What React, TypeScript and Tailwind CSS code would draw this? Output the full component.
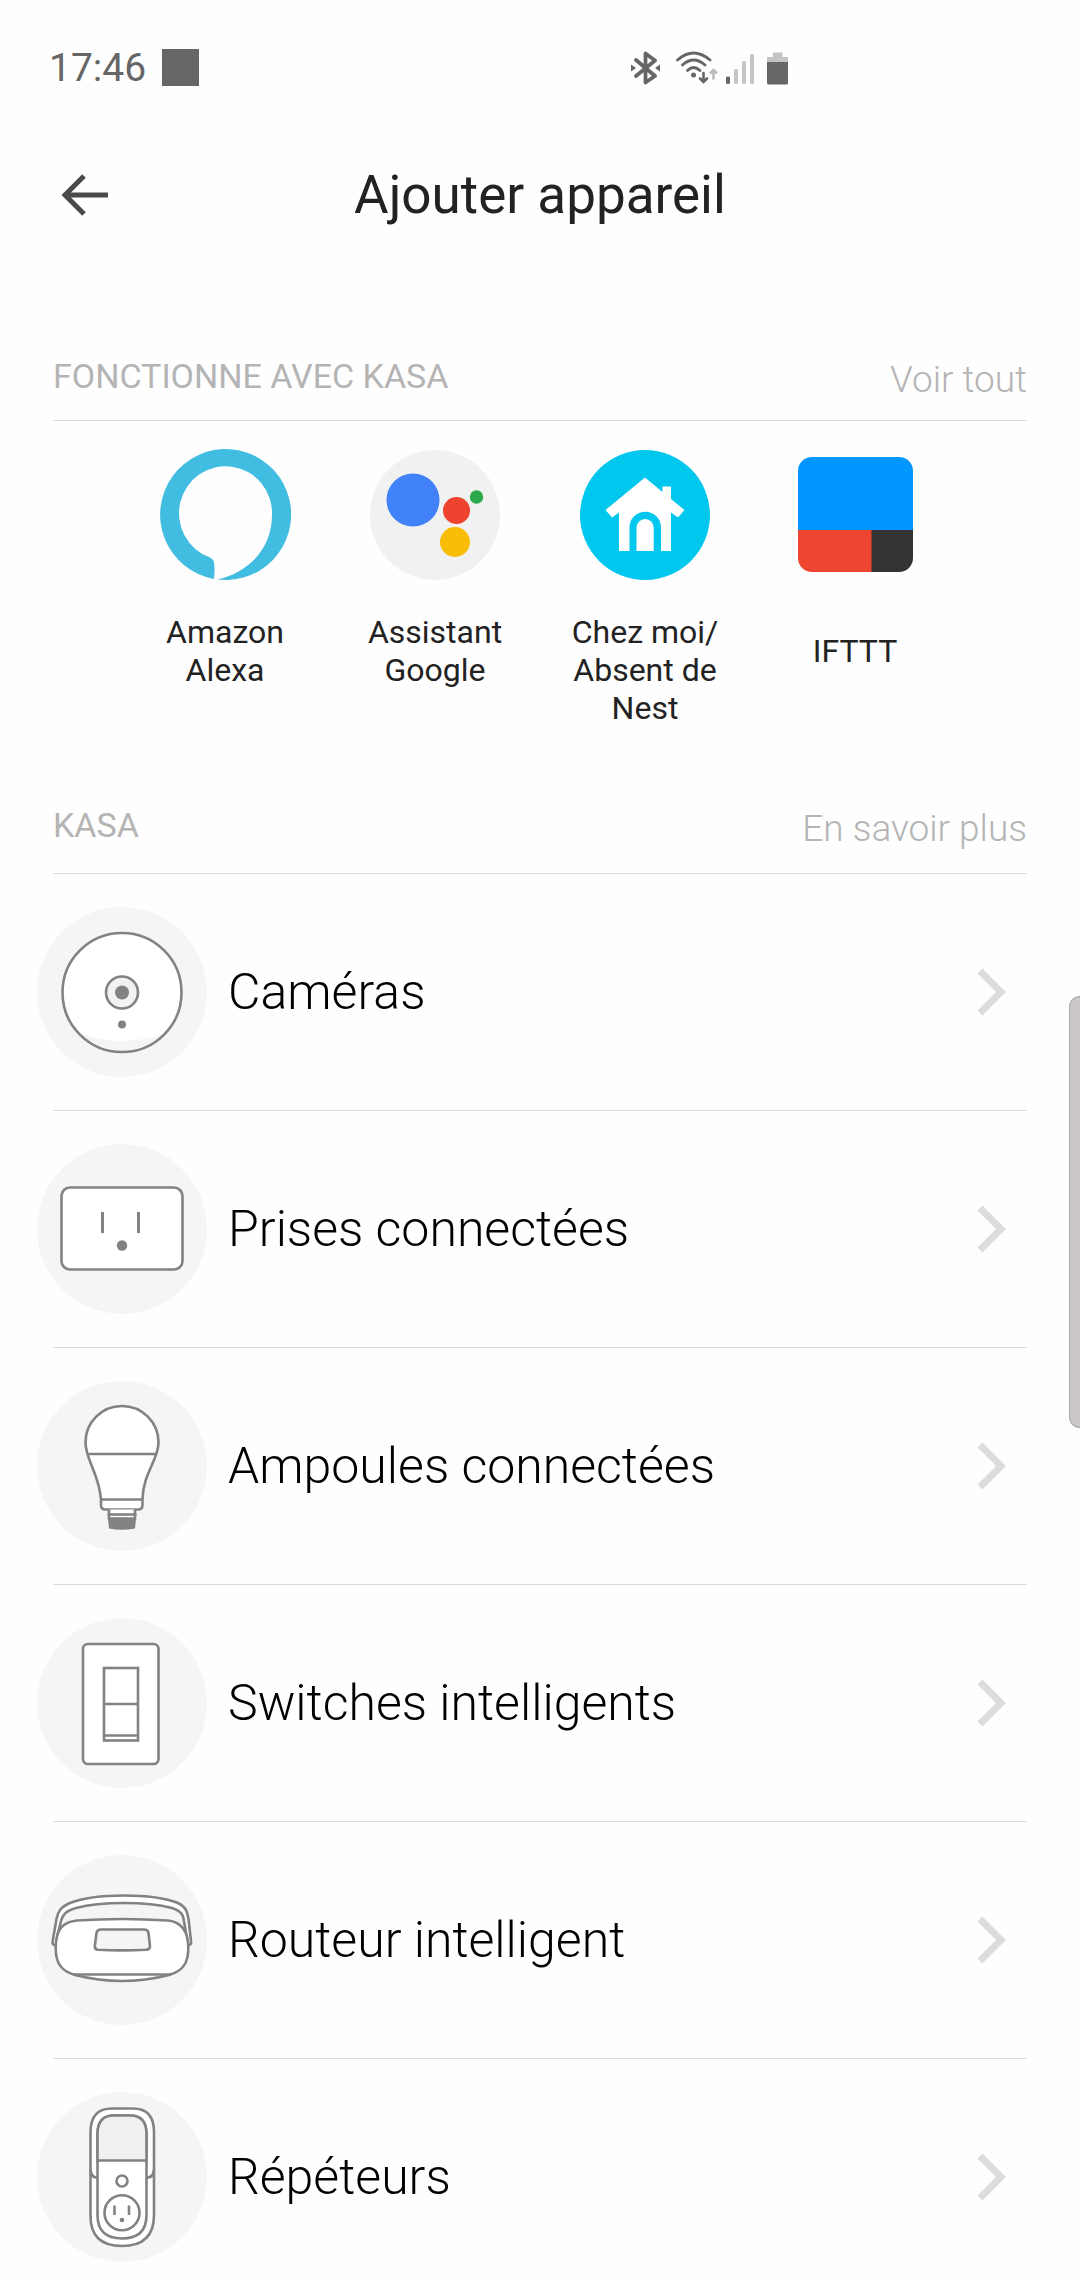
import React from 'react';

interface Partner {
  id: string;
  name: string;
  logo: React.ReactNode;
}

interface Category {
  id: string;
  name: string;
  icon: React.ReactNode;
}

const partners: Partner[] = [
  { id: 'alexa', name: 'Amazon Alexa', logo: <AlexaLogo /> },
  { id: 'google', name: 'Assistant Google', logo: <GoogleLogo /> },
  { id: 'nest', name: 'Chez moi/ Absent de Nest', logo: <NestLogo /> },
  { id: 'ifttt', name: 'IFTTT', logo: <IftttLogo /> },
];

const categories: Category[] = [
  { id: 'cameras', name: 'Caméras', icon: <CameraIcon /> },
  { id: 'plugs', name: 'Prises connectées', icon: <PlugIcon /> },
  { id: 'bulbs', name: 'Ampoules connectées', icon: <BulbIcon /> },
  { id: 'switches', name: 'Switches intelligents', icon: <SwitchIcon /> },
  { id: 'router', name: 'Routeur intelligent', icon: <RouterIcon /> },
  { id: 'extenders', name: 'Répéteurs', icon: <ExtenderIcon /> },
];

/* Partner logos */

function AlexaLogo() {
  return (
    <svg className="size-[131px]" viewBox="0 0 131 131" aria-hidden="true">
      <path
        fill="#40bde0"
        d="M54 130A65.5 65.5 0 1 1 68 131L57 130.5C88 124 112 100 112 66A46.5 47 0 1 0 50 108.500Q53 109.500 54 113Q55 120 54 130Z"
      />
    </svg>
  );
}

function GoogleLogo() {
  return (
    <svg className="size-[130px]" viewBox="0 0 130 130" aria-hidden="true">
      <circle cx="65" cy="65" r="65" fill="#f1f1f1" />
      <circle cx="43" cy="50" r="26.5" fill="#4182f8" />
      <circle cx="86.500" cy="60.500" r="13.500" fill="#ee432e" />
      <circle cx="106.500" cy="47" r="6.700" fill="#2ba84a" />
      <circle cx="85" cy="92" r="15" fill="#fabd05" />
    </svg>
  );
}

function NestLogo() {
  return (
    <svg className="size-[130px]" viewBox="0 0 130 130" aria-hidden="true">
      <circle cx="65" cy="65" r="65" fill="#00c7ee" />
      <path
        fill="#fff"
        d="M65 27.500L82.500 42V36.500H91V49L104.500 60L98 67.500L91 62.500V101H81V77.500A15.700 15.700 0 0 0 49.500 77.500V101H39V62.500L32 67.500L25.500 60Z"
      />
      <path fill="#fff" d="M56.500 101V77.500A8.600 8.600 0 0 1 73.700 77.500V101Z" />
    </svg>
  );
}

function IftttLogo() {
  return (
    <svg className="size-[115px]" viewBox="0 0 115 115" aria-hidden="true">
      <clipPath id="ifttt-tile">
        <rect width="115" height="115" rx="14" />
      </clipPath>
      <g clipPath="url(#ifttt-tile)">
        <rect width="115" height="74" fill="#0096ff" />
        <rect y="73" width="74" height="42" fill="#ee4530" />
        <rect x="73.500" y="73" width="42" height="42" fill="#333" />
      </g>
    </svg>
  );
}

/* Category icons: outline drawings on a grey disc */

function Disc({ children }: { children: React.ReactNode }) {
  return (
    <svg
      className="size-[170px] shrink-0"
      viewBox="0 0 170 170"
      fill="#fff"
      stroke="#828282"
      strokeWidth="2.600"
      aria-hidden="true"
    >
      <circle cx="85" cy="85" r="85" fill="#f5f5f5" stroke="none" />
      {children}
    </svg>
  );
}

function CameraIcon() {
  return (
    <Disc>
      <circle cx="85" cy="85.500" r="59.500" stroke="none" />
      <path d="M43 126Q85 142 127 126A59.500 59.500 0 0 1 43 126Z" fill="#f5f5f5" stroke="none" />
      <circle cx="85" cy="85.500" r="59.500" fill="none" />
      <circle cx="85" cy="85.500" r="16" fill="#f2f2f2" />
      <circle cx="85" cy="85.500" r="7" fill="#828282" stroke="none" />
      <circle cx="85" cy="117.500" r="4" fill="#828282" stroke="none" />
    </Disc>
  );
}

function PlugIcon() {
  return (
    <Disc>
      <rect x="24.500" y="43.500" width="121" height="82" rx="8.500" />
      <path d="M65.500 68V89M101.500 68V89" strokeWidth="3" />
      <circle cx="85" cy="101.500" r="5.200" fill="#828282" stroke="none" />
    </Disc>
  );
}

function BulbIcon() {
  return (
    <Disc>
      <path d="M64 118.500C62 92 48.500 79 48.500 61.500A36.500 36.500 0 0 1 121.500 61.500C121.500 79 106 92 105.500 118.500V124Q105.500 128.500 101 128.500H68.500Q64 128.500 64 124Z" />
      <path d="M51.500 73H118.500M64 118.500H105.500" />
      <path d="M72 128.500V137.500H98V128.500" />
      <path d="M70.500 133.500H99.500" />
      <path d="M71 137.500H99L98 147.500Q85 150 72 147.500Z" fill="#828282" stroke="none" />
    </Disc>
  );
}

function SwitchIcon() {
  return (
    <Disc>
      <rect x="46" y="26" width="75.500" height="120" rx="5" />
      <rect x="67" y="50" width="34" height="72.500" />
      <path d="M67 86H101M67 117.500H101" />
    </Disc>
  );
}

function RouterIcon() {
  return (
    <Disc>
      <path
        strokeLinecap="round"
        d="M18 90Q15 90 15.700 86L19.500 64C21 56 24 52 33 48Q52 40.500 87 40.500T141 48C149 52 150 56 151.500 64L154 86Q155 90 151 90"
      />
      <path
        fill="#f5f5f5"
        d="M21 78L24 66C26 59 29 56 39 53Q58 48 87 48T135 53C144 56 146 59 147 66L149 78Z"
      />
      <path d="M18.700 93C18.700 74 26 67 40 65.500Q85 62.500 131 65.500C145 67 151.300 76 151.300 93C151.300 108 146 116 132 120Q85 132 38 120C24 116 18.700 108 18.700 93Z" />
      <path d="M36 119.500H134" fill="none" />
      <path
        fill="#f5f5f5"
        d="M64 74.500H107Q111 74.500 111.500 78L113 91Q113 94.500 109 94.800Q85 96 61 94.800Q57.500 94.500 57.800 91L59.500 78Q60 74.500 64 74.500Z"
      />
    </Disc>
  );
}

function ExtenderIcon() {
  return (
    <Disc>
      <path d="M53.500 40Q53.500 16.500 75 16.500H96Q117 16.500 117 40V123Q117 154 85 154T53.500 123Z" />
      <path d="M60.500 42Q60.500 23.500 77 23.500H93Q109.500 23.500 109.500 42V123Q109.500 146.500 85 146.500T60.500 123Z" />
      <path d="M60.500 68.500V42Q60.500 23.500 77 23.500H93Q109.500 23.500 109.500 42V68.500Z" fill="#f1f1f1" />
      <path d="M53.500 78Q54.500 86 60.500 85.500M117 78Q116 86 109.500 85.500" fill="none" />
      <circle cx="85" cy="89" r="5.500" />
      <circle cx="85" cy="120.700" r="17.500" />
      <path d="M77.500 113.500V123M92 113.500V123" />
      <circle cx="85" cy="128" r="2.300" fill="#828282" stroke="none" />
    </Disc>
  );
}

/* System status bar */

function StatusBar() {
  return (
    <div className="flex h-[135px] items-center pl-[49px] text-[#666]">
      <span className="text-[39px] leading-10">17:46</span>
      <span className="ml-4 size-[37px] bg-[#666]" />
      <div className="ml-[432px] flex items-center">
        <svg className="h-[34px] w-[29px]" viewBox="0 0 29 34" fill="none" stroke="currentColor" aria-hidden="true">
          <path
            d="M5 9L24 25L14.500 31.500V2.500L24 9.500L5 25"
            strokeWidth="3.800"
            strokeLinecap="round"
            strokeLinejoin="round"
          />
          <path d="M0 13.500L5 17L0 20.500ZM29 13.500L24 17L29 20.500Z" fill="currentColor" stroke="none" />
        </svg>
        <svg className="ml-4 h-[34px] w-[42px]" viewBox="0 0 42 34" fill="none" stroke="currentColor" aria-hidden="true">
          <path
            d="M1.500 9Q17.500 -5 34 9M6.500 14Q17.500 4 29 14M11.500 19.500Q17.500 13.500 24 19.500"
            strokeWidth="2.800"
            strokeLinecap="round"
          />
          <circle cx="17.500" cy="24" r="2.500" fill="currentColor" stroke="none" />
          <path d="M27.500 22V31M24 27.500L27.500 31L31 27.500" strokeWidth="2.600" strokeLinecap="round" />
          <path d="M37.500 28.500V19M34 22.500L37.500 19L41 22.500" stroke="#bbb" strokeWidth="2.600" />
        </svg>
        <svg className="ml-2 h-[34px] w-7" viewBox="0 0 28 34" fill="#c4c4c4" aria-hidden="true">
          <rect y="25.500" width="4" height="7.500" rx="1.500" fill="#666" />
          <rect x="8" y="18" width="4" height="15" rx="1.500" />
          <rect x="16" y="10" width="4" height="23" rx="1.500" />
          <rect x="24" y="3" width="4" height="30" rx="1.500" />
        </svg>
        <svg className="ml-[13px] h-[34px] w-[21px]" viewBox="0 0 21 34" aria-hidden="true">
          <path d="M6 1.500H15.500V6H21V12H0V6H6Z" fill="#c4c4c4" />
          <path d="M0 11H21V32Q21 33.500 19.500 33.500H1.500Q0 33.500 0 32Z" fill="#666" />
        </svg>
      </div>
    </div>
  );
}

function SectionHeader({ title, action, className }: { title: string; action: string; className: string }) {
  return (
    <div className={`flex items-end justify-between border-b border-[#dcdcdc] text-[#b4b4b4] ${className}`}>
      <h2 className="pb-1 text-[34px] leading-10">{title}</h2>
      <a href="#" className="text-[37px] leading-10 font-light">
        {action}
      </a>
    </div>
  );
}

export default function App() {
  return (
    <div className="relative h-screen overflow-hidden bg-[#fefefe] font-['Roboto',sans-serif] text-[#222]">
      <StatusBar />

      <header className="grid h-[120px] grid-cols-[1fr_auto_1fr] items-center px-[53px]">
        <button type="button" aria-label="Retour" className="w-14 pl-2">
          <svg className="h-[42px] w-12" viewBox="0 0 48 42" fill="none" stroke="#4a4a4a" strokeWidth="5" aria-hidden="true">
            <path d="M47 21H4M23 2L4 21L23 40" />
          </svg>
        </button>
        <h1 className="text-[53px] leading-16">Ajouter appareil</h1>
      </header>

      <main className="px-[53px]">
        {/* Services partenaires */}
        <section className="pt-[101px]">
          <SectionHeader title="FONCTIONNE AVEC KASA" action="Voir tout" className="pb-5" />
          <ul className="grid grid-cols-4 px-[67px] pt-7">
            {partners.map(partner => (
              <li key={partner.id}>
                <a href="#" className="flex flex-col items-center">
                  <span className="flex h-[131px] items-center">{partner.logo}</span>
                  <span className="mt-[33px] flex min-h-[76px] w-[160px] items-center justify-center text-center text-[32px] leading-[38px]">
                    {partner.name}
                  </span>
                </a>
              </li>
            ))}
          </ul>
        </section>

        {/* Catégories d'appareils */}
        <section className="pt-[78px]">
          <SectionHeader title="KASA" action="En savoir plus" className="pb-6" />
          <ul className="divide-y divide-[#dcdcdc]">
            {categories.map(category => (
              <li key={category.id}>
                <button type="button" className="-ml-4 flex h-[236px] w-full items-center pr-1 text-left">
                  {category.icon}
                  <span className="ml-[21px] flex-1 text-[50px] leading-14 font-light text-black">
                    {category.name}
                  </span>
                  <svg className="h-12 w-[30px]" viewBox="0 0 30 48" fill="none" stroke="#dcdcdc" strokeWidth="7" aria-hidden="true">
                    <path d="M3 3L24 24L3 45" />
                  </svg>
                </button>
              </li>
            ))}
          </ul>
        </section>
      </main>

      {/* Poignée du panneau latéral */}
      <div className="absolute top-[996px] right-0 h-[432px] w-[11px] rounded-l-xl border border-r-0 border-[#aaa6a6] bg-[#ccc8c8]" />
    </div>
  );
}
